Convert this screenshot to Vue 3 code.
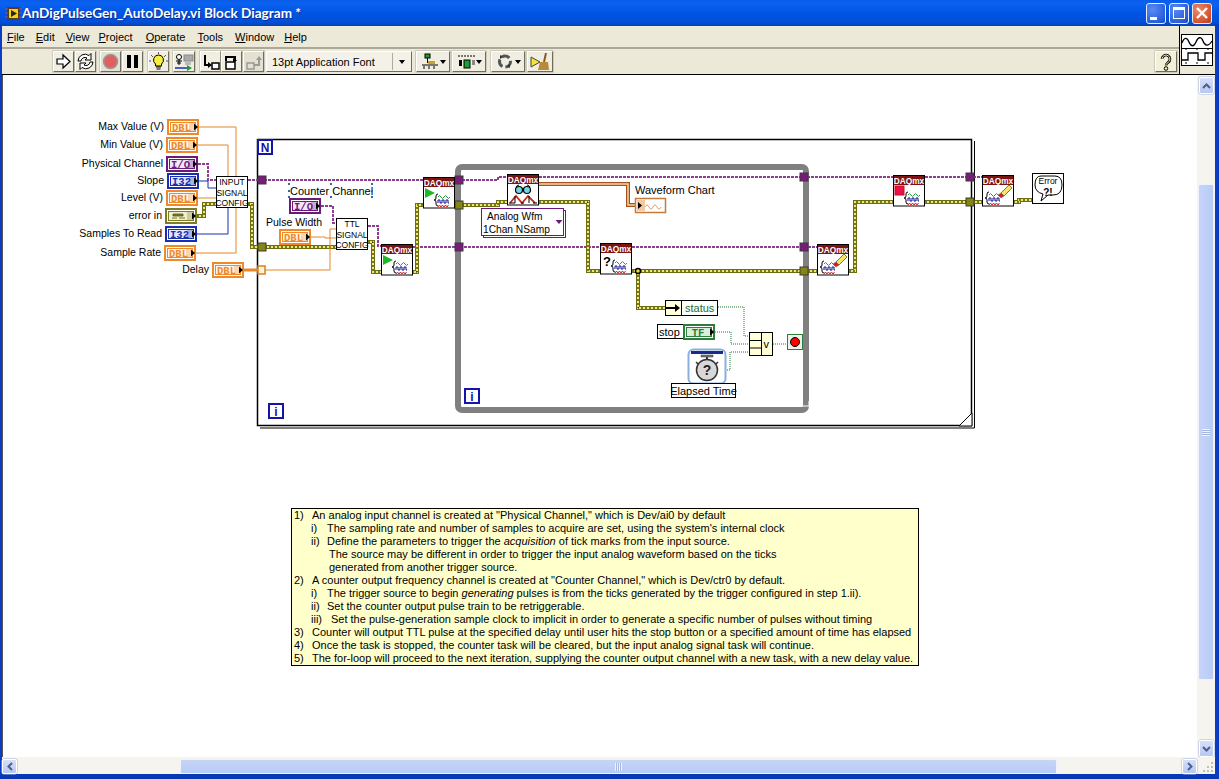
<template>
  <div class="window">
    <header class="titlebar">
      <svg class="title-icon" width="17" height="17" viewBox="0 0 17 17">
        <rect x="2" y="2" width="13" height="13" fill="#5a3a1a" />
        <rect x="4" y="4" width="9" height="9" fill="#f2d21e" />
        <path d="M6 5l6 3.5-6 3.5z" fill="#2a2a10" />
        <path d="M0 4h3M0 8h3M0 12h3M14 4h3M14 8h3M14 12h3" stroke="#c8452a" stroke-width="1.2" />
      </svg>
      <span class="title-text">AnDigPulseGen_AutoDelay.vi Block Diagram *</span>
      <div class="win-buttons">
        <div class="win-btn">
          <span class="min-mark"></span>
        </div>
        <div class="win-btn">
          <span class="max-mark"></span>
        </div>
        <div class="win-btn close">
          <svg width="14" height="14" viewBox="0 0 14 14">
            <path d="M2 2l10 10M12 2L2 12" stroke="#fff" stroke-width="2.4" />
          </svg>
        </div>
      </div>
    </header>

    <div class="bars">
      <div class="bars-left">
        <nav class="menubar">
          <span v-for="m in menus" :key="m" class="menu-item"><u>{{ m[0] }}</u>{{ m.slice(1) }}</span>
        </nav>
        <div class="toolbar">
          <button class="tool">
            <svg width="17" height="17" viewBox="0 0 17 17"><path d="M2 6h6V2l7 6.500-7 6.500v-4H2z" fill="#fff" stroke="#000" stroke-width="1.2" /></svg>
          </button>
          <button class="tool g1">
            <svg width="19" height="19" viewBox="0 0 19 19">
              <path d="M2 9a7 7 0 0 1 11-5.500L15 1.500V8H9l2-2a4 4 0 0 0-6 3z" fill="#fff" stroke="#000" />
              <path d="M17 10a7 7 0 0 1-11 5.500L4 17.500V11h6l-2 2a4 4 0 0 0 6-3z" fill="#fff" stroke="#000" />
            </svg>
          </button>
          <button class="tool pale g4">
            <svg width="17" height="17" viewBox="0 0 17 17"><circle cx="8.500" cy="8.500" r="7" fill="#e06060" stroke="#999" stroke-width="1.500" /></svg>
          </button>
          <button class="tool g1">
            <svg width="15" height="15" viewBox="0 0 15 15"><path d="M2 1h4v13H2zM9 1h4v13H9z" fill="#000" /></svg>
          </button>
          <button class="tool g5">
            <svg width="19" height="19" viewBox="0 0 19 19">
              <path d="M9.500 3a5 5 0 0 0-3 9v2h6v-2a5 5 0 0 0-3-9z" fill="#f7ee3a" stroke="#000" />
              <path d="M7 15h5M7.500 17h4" stroke="#000" />
              <path d="M9.500 0v2M2 3l2 2M17 3l-2 2M0 9h2M17 9h2" stroke="#555" />
            </svg>
          </button>
          <button class="tool g4 wide">
            <svg width="20" height="18" viewBox="0 0 20 18">
              <circle cx="5" cy="4" r="2.500" fill="#fff" stroke="#000" />
              <path d="M5 7v5M2 8h6M3 10h4" stroke="#000" />
              <rect x="10" y="2" width="9" height="6" fill="#aaa" stroke="#888" />
              <rect x="11" y="9" width="6" height="3" fill="#bbb" />
              <path d="M1 15h13" stroke="#1a2fb0" stroke-width="1.500" />
              <path d="M13 12l5 3-5 3z" fill="#18a030" />
            </svg>
          </button>
          <button class="tool g5">
            <svg width="18" height="18" viewBox="0 0 18 18"><path d="M3 2v10h5" fill="none" stroke="#000" stroke-width="2" /><path d="M6 9l4 3-4 3z" fill="#000" /><rect x="10" y="10" width="7" height="6" fill="#fff" stroke="#000" stroke-width="1.500" /></svg>
          </button>
          <button class="tool">
            <svg width="18" height="18" viewBox="0 0 18 18"><path d="M3 8V4h9v3" fill="none" stroke="#000" stroke-width="2" /><path d="M10 5l4 2.500-4 2.500z" fill="#000" /><rect x="3" y="9" width="9" height="7" fill="#fff" stroke="#000" stroke-width="1.500" /></svg>
          </button>
          <button class="tool pale g1">
            <svg width="18" height="18" viewBox="0 0 18 18"><rect x="2" y="10" width="7" height="6" fill="none" stroke="#999" stroke-width="1.500" /><path d="M9 12h5V6" fill="none" stroke="#999" stroke-width="2" /><path d="M11 7l3-4 3 4z" fill="#999" /></svg>
          </button>
          <button class="font-ring g2">
            <span class="font-name">13pt Application Font</span>
            <span class="font-drop"><i class="caret"></i></span>
          </button>
          <button class="tool ring g4">
            <svg width="20" height="17" viewBox="0 0 20 17"><rect x="4" y="1" width="5" height="4" fill="#18a030" stroke="#000" /><path d="M6.500 5v5M1 12h16" stroke="#000" /><rect x="7" y="8" width="7" height="3" fill="#c9a227" /><path d="M3 13v3M8 13v3M13 13v3" stroke="#000" /></svg>
            <i class="caret small"></i>
          </button>
          <button class="tool ring g2">
            <svg width="20" height="17" viewBox="0 0 20 17"><path d="M1 3h17" stroke="#000" stroke-dasharray="2 1" /><rect x="2" y="7" width="3" height="6" fill="#000" /><rect x="7" y="7" width="6" height="8" fill="#18a030" stroke="#000" /><rect x="15" y="7" width="3" height="5" fill="#888" /></svg>
            <i class="caret small"></i>
          </button>
          <button class="tool ring g5">
            <svg width="20" height="17" viewBox="0 0 20 17"><circle cx="9" cy="8.500" r="5.500" fill="none" stroke="#555" stroke-width="3" stroke-dasharray="8 3" /><path d="M4 2l3 2-3 2zM14 11l-3 2 3 2z" fill="#333" /></svg>
            <i class="caret small"></i>
          </button>
          <button class="tool broom g2">
            <svg width="20" height="18" viewBox="0 0 20 18"><path d="M1 4l9 5-9 5z" fill="#f2e33a" stroke="#444" /><path d="M16 0l-2 9" stroke="#8a5a20" stroke-width="2" /><path d="M10 9h8l1 8H8z" fill="#b98a3c" /></svg>
          </button>
          <div class="spacer"></div>
          <button class="tool help">
            <svg width="18" height="18" viewBox="0 0 18 18"><path d="M5 6a4 4 0 1 1 6 3.500c-1.500 1-2 1.500-2 3" fill="none" stroke="#000" stroke-width="2.600" /><path d="M5 6a4 4 0 1 1 6 3.500c-1.500 1-2 1.500-2 3" fill="none" stroke="#fbf3a0" stroke-width="1" /><circle cx="9" cy="15.500" r="1.800" fill="#fbf3a0" stroke="#000" /></svg>
          </button>
        </div>
      </div>
      <div class="vi-icon-pane">
        <svg class="vi-icon" width="32" height="32" viewBox="0 0 32 32">
          <rect x="0.500" y="0.500" width="31" height="31" fill="#fff" stroke="#000" />
          <path d="M1 9c2-6 5-6 7-1s5 5 7 0 5-6 7-1 5 6 9 0" fill="none" stroke="#000" stroke-width="1.300" />
          <path d="M5 14v2M16 14v2M27 14v2M5 28v2M16 28v2M27 28v2M1 14.500h30" stroke="#000" />
          <path d="M1 26h6v-7h10v7h7v-7h7" fill="none" stroke="#000" stroke-width="1.300" />
        </svg>
      </div>
    </div>

    <div class="main">
      <div class="canvas">
        <svg class="diagram" width="1194" height="683" viewBox="3 74 1194 683">
          <defs>
            <g id="wfm">
              <path d="M4 0q-2 0-2 2v2q0 2-2 2 2 0 2 2v2q0 2 2 2" fill="none" stroke="#000" />
              <path d="M4 3q1.500-3 3 0t3 0 3 0 3 0" fill="none" stroke="#2a9a3a" />
              <path d="M4 9V6h2v3h2V6h2v3h2V6h2v3h1" fill="none" stroke="#10109a" />
              <path d="M4 13l1.500-2 1.500 2 1.500-2 1.500 2 1.500-2 1.500 2 1.500-2" fill="none" stroke="#d02020" />
            </g>
          </defs>

          <!-- for loop -->
          <rect x="257.500" y="138.500" width="714" height="286" fill="none" stroke="#000" stroke-width="1.500" />
          <path d="M974.500 140v287H260" fill="none" stroke="#000" />
          <path d="M959 425l13-13v13z" fill="#fff" stroke="#000" />

          <!-- while loop -->
          <rect x="458" y="166" width="348" height="243" rx="4" fill="none" stroke="#808080" stroke-width="6" />
          <path d="M803 405h6v-5" fill="none" stroke="#fff" />

          <g v-for="(w, i) in wires" :key="i">
            <template v-if="w.kind === 'err'">
              <path :d="w.d" class="w err-a" />
              <path :d="w.d" class="w err-b" />
              <path :d="w.d" class="w err-c" />
            </template>
            <template v-else-if="w.kind === 'wave'">
              <path :d="w.d" class="w wave-a" />
              <path :d="w.d" class="w wave-b" />
            </template>
            <path v-else :d="w.d" class="w" :class="w.kind" />
          </g>
          <circle cx="638" cy="270" r="2.500" fill="#e8e050" stroke="#000" stroke-width="1.500" />

          <rect v-for="t in tunnels" :key="t.x + '-' + t.y" :x="t.x - 4" :y="t.y - 4" width="8" height="8" :fill="t.task ? '#7a1a7c' : '#85850f'" stroke="#3a3a3a" />
          <rect x="258" y="265" width="7" height="8" fill="#fff6d8" stroke="#d97f1f" stroke-width="1.500" />

          <!-- iteration and count boxes -->
          <g class="loop-box">
            <rect x="258" y="139" width="14" height="14" />
            <text x="265" y="150.500">N</text>
            <rect x="269" y="403" width="14" height="14" />
            <text x="276" y="414.500">i</text>
            <rect x="465" y="388" width="14" height="14" />
            <text x="472" y="399.500">i</text>
          </g>

          <!-- front panel terminals -->
          <g v-for="t in terminals" :key="t.label">
            <text class="label term" :x="t.x - 3" :y="t.y + 3" text-anchor="end">{{ t.label }}</text>
            <rect :x="t.x + 1" :y="t.y - 7" width="30" height="14" fill="#fff" :stroke="kinds[t.kind].c" stroke-width="2" />
            <rect :x="t.x + 3.500" :y="t.y - 4.500" width="25" height="9" :fill="kinds[t.kind].bg" :stroke="kinds[t.kind].c" />
            <rect :x="t.x + 22" :y="t.y - 4" width="6" height="8" :fill="kinds[t.kind].c" opacity="0.300" />
            <text v-if="t.kind !== 'err'" class="type" :x="t.x + 14.500" :y="t.y + 3.500" :fill="kinds[t.kind].c">{{ kinds[t.kind].txt }}</text>
            <path v-else :d="`M${t.x + 8} ${t.y - 2}h10v2h-10zM${t.x + 7} ${t.y + 2}h5M${t.x + 14} ${t.y + 2}h6`" fill="#7d7d28" stroke="#555510" stroke-width="0.800" />
            <path :d="`M${t.x + 27} ${t.y - 3.500}l4 3.500-4 3.500z`" fill="#000" />
          </g>

          <!-- free labels -->
          <text class="label term" x="266" y="225">Pulse Width</text>
          <text class="label" x="290" y="194">Counter Channel</text>
          <path d="M288 182h2v2h-2zM330 182h2v2h-2zM371 182h2v2h-2zM288 189h2v2h-2zM371 189h2v2h-2zM288 195h2v2h-2zM330 195h2v2h-2zM371 195h2v2h-2z" fill="#2a6ab0" />

          <!-- cluster sub vis -->
          <g v-for="b in subvis" :key="b.x">
            <rect :x="b.x + 0.500" :y="b.y + 0.500" width="31" height="31" fill="#fff" stroke="#000" />
            <text v-for="(l, n) in b.lines" :key="l" class="sub-text" :x="b.x + 16" :y="b.y + 9 + n * 10.500">{{ l }}</text>
          </g>

          <!-- daqmx blocks -->
          <g v-for="b in daq" :key="b.x + '-' + b.y" :transform="`translate(${b.x} ${b.y})`">
            <rect x="0.500" y="0.500" width="31" height="30.500" fill="#fff" stroke="#000" />
            <rect x="1" y="1" width="30" height="9" fill="#7c1414" />
            <text class="daq-text" x="16" y="8.500">DAQmx</text>
            <use v-if="b.kind !== 'read'" href="#wfm" :x="b.kind === 'clear' ? 3 : 11" y="17" />
            <path v-if="b.kind === 'start'" d="M2 11l10 5-10 5z" fill="#1fb82a" />
            <rect v-if="b.kind === 'stop'" x="2" y="11" width="9" height="9" fill="#ee1144" stroke="#c01030" />
            <text v-if="b.kind === 'done'" class="done-mark" x="7" y="23">?</text>
            <g v-if="b.kind === 'clear'">
              <path d="M19 18l8-8 3 3-8 8z" fill="#f4e66a" stroke="#8a7a20" />
              <path d="M19 18l3 3-3 2-3-3z" fill="#d21f1f" stroke="#666" stroke-width="0.500" />
            </g>
            <g v-if="b.kind === 'read'">
              <circle cx="12" cy="16" r="3.500" fill="#6fd6e6" stroke="#000" stroke-width="1.200" />
              <circle cx="20" cy="16" r="3.500" fill="#6fd6e6" stroke="#000" stroke-width="1.200" />
              <path d="M9 13q1-2 3-2M23 13q-1-2-3-2M15 15h2" fill="none" stroke="#000" />
              <path d="M3 29l6-7 6 7 6-7 7 7" fill="none" stroke="#cc2a1a" stroke-width="1.800" />
              <path d="M2 29h6M14 29h3M26 29h4M8 22v7M22 22v7" stroke="#000" />
            </g>
          </g>

          <!-- polymorphic selector -->
          <rect x="483.500" y="209.500" width="82" height="27" fill="#fff" stroke="#6a1b7a" />
          <rect x="481.500" y="207.500" width="82" height="27" fill="#fff" stroke="#6a1b7a" />
          <text class="label poly" x="487" y="219">Analog Wfm</text>
          <text class="label poly" x="483" y="232">1Chan NSamp</text>
          <path d="M555.500 219h7l-3.500 4z" fill="#6a1b7a" />

          <!-- chart -->
          <text class="label" x="635" y="193">Waveform Chart</text>
          <rect x="635.500" y="197.500" width="30" height="14" fill="#fff" stroke="#c67a3c" stroke-width="1.500" />
          <rect x="637" y="199" width="8" height="11" fill="#f4c9a0" />
          <path d="M638 201l4 3.500-4 3.500z" fill="#000" />
          <path d="M645 206q2-4 4 0t4 0 4 0 4 0" fill="none" stroke="#e0a070" />

          <!-- unbundle -->
          <rect x="665.500" y="299.500" width="52" height="15" fill="#fff" stroke="#000" />
          <rect x="666" y="300" width="15" height="14" fill="#ffffd8" />
          <path d="M681.500 300v14" stroke="#000" />
          <path d="M666 307h10" stroke="#000" stroke-width="2" />
          <path d="M675 303l5 4-5 4z" fill="#000" />
          <text class="label green" x="685" y="311">status</text>

          <!-- stop -->
          <rect x="657.500" y="323.500" width="26" height="14" fill="#fff" stroke="#000" />
          <text class="label" x="659" y="334.500">stop</text>
          <rect x="684" y="324" width="30" height="14" fill="#fff" stroke="#2d7d3c" stroke-width="2" />
          <rect x="686.500" y="326.500" width="25" height="9" fill="#d8f0d8" stroke="#2d7d3c" />
          <text class="type" x="698" y="334.500" fill="#2d7d3c">TF</text>
          <path d="M710 327l4 4-4 4z" fill="#000" />

          <!-- compound or -->
          <rect x="749.500" y="331.500" width="23" height="23" fill="#ffffd8" stroke="#000" />
          <path d="M761.500 332v22M750 339.500h11M750 347h11" stroke="#000" />
          <text class="label" x="763.500" y="347">v</text>

          <!-- loop condition -->
          <rect x="787.500" y="333.500" width="15" height="15" fill="#eaf4ea" stroke="#2d7d3c" />
          <circle cx="795" cy="341" r="4.500" fill="#ff0000" stroke="#000" />

          <!-- elapsed time -->
          <rect x="688.500" y="348.500" width="37" height="34" rx="5" fill="#fff" stroke="#8ab0e0" stroke-width="2" />
          <path d="M691 350h32v3h-32z" fill="#1a2a8a" />
          <path d="M701 354h12v2h-12z" fill="#777" stroke="#333" stroke-width="0.500" />
          <path d="M707 356v3" stroke="#333" stroke-width="2" />
          <path d="M696 361l2 2M718 361l-2 2" stroke="#333" stroke-width="1.500" />
          <circle cx="707" cy="369" r="10.500" fill="#d8d8d8" stroke="#333" stroke-width="1.500" />
          <text class="stopwatch" x="707" y="374">?</text>
          <rect x="671.500" y="382.500" width="64" height="14" fill="#fff" stroke="#000" />
          <text class="label" x="703.500" y="393.500" text-anchor="middle">Elapsed Time</text>

          <!-- error handler -->
          <rect x="1032.500" y="172.500" width="31" height="30" fill="#fff" stroke="#000" />
          <path d="M1041 175h14q7 0 7 9 0 10-9 10h-5l-7 6 2-7q-8-2-8-9 0-9 6-9z" fill="#fff" stroke="#000" />
          <text class="err-word" x="1048" y="182.500">Error</text>
          <text class="err-mark" x="1048" y="195">?!</text>
        </svg>

        <div class="note">
          <div v-for="(r, i) in notes" :key="i" class="note-row" :class="r.cls">
            <span class="note-mark">{{ r.mark }}</span>
            <span>{{ r.text }}<em v-if="r.em">{{ r.em }}</em>{{ r.tail }}</span>
          </div>
        </div>
      </div>
      <div class="vscroll">
        <div class="sb-btn">
          <svg width="9" height="6" viewBox="0 0 9 6"><path d="M1 5l3.500-3.500L8 5" fill="none" stroke="#4d6185" stroke-width="2" /></svg>
        </div>
        <div class="vtrack">
          <div class="vthumb"><span class="grip-v"></span></div>
        </div>
        <div class="sb-btn">
          <svg width="9" height="6" viewBox="0 0 9 6"><path d="M1 1l3.500 3.500L8 1" fill="none" stroke="#4d6185" stroke-width="2" /></svg>
        </div>
      </div>
    </div>

    <div class="hscroll">
      <div class="sb-btn narrow">
        <svg width="6" height="9" viewBox="0 0 6 9"><path d="M5 1L1.500 4.500 5 8" fill="none" stroke="#4d6185" stroke-width="2" /></svg>
      </div>
      <div class="htrack">
        <div class="hthumb"><span class="grip-h"></span></div>
      </div>
      <div class="sb-btn narrow">
        <svg width="6" height="9" viewBox="0 0 6 9"><path d="M1 1l3.500 3.500L1 8" fill="none" stroke="#4d6185" stroke-width="2" /></svg>
      </div>
      <div class="size-grip">
        <svg width="14" height="13" viewBox="0 0 14 13"><path d="M10 3h2v2h-2zM10 7h2v2h-2zM6 7h2v2H6zM10 11h2v2h-2zM6 11h2v2H6zM2 11h2v2H2z" fill="#c2bfb0" /></svg>
      </div>
    </div>
  </div>
</template>

<script setup>
const menus = ["File", "Edit", "View", "Project", "Operate", "Tools", "Window", "Help"];

const kinds = {
  dbl: { c: "#ee8a2c", bg: "#fff6e8", txt: "DBL" },
  i32: { c: "#1a2fb0", bg: "#e4e8ff", txt: "I32" },
  io: { c: "#6a1b7a", bg: "#f4e6f6", txt: "I/O" },
  err: { c: "#7d7d28", bg: "#f0f0cc", txt: "" },
};

const terminals = [
  { label: "Max Value (V)", kind: "dbl", x: 167, y: 126 },
  { label: "Min Value (V)", kind: "dbl", x: 166, y: 144 },
  { label: "Physical Channel", kind: "io", x: 166, y: 163 },
  { label: "Slope", kind: "i32", x: 167, y: 180 },
  { label: "Level (V)", kind: "dbl", x: 166, y: 197 },
  { label: "error in", kind: "err", x: 165, y: 215 },
  { label: "Samples To Read", kind: "i32", x: 165, y: 233 },
  { label: "Sample Rate", kind: "dbl", x: 164, y: 252 },
  { label: "Delay", kind: "dbl", x: 212, y: 269 },
  { label: "", kind: "dbl", x: 279, y: 236 },
  { label: " ", kind: "io", x: 289, y: 205 },
];

const wires = [
  { kind: "dbl", d: "M199 126H236V252H196" },
  { kind: "dbl", d: "M198 144H228V176" },
  { kind: "task", d: "M198 163H208V179H216" },
  { kind: "i32", d: "M199 180H208V187H216" },
  { kind: "dbl", d: "M198 197H216" },
  { kind: "err", d: "M197 215H204V203H216" },
  { kind: "i32", d: "M197 233H228V207" },
  { kind: "task", d: "M248 179H423" },
  { kind: "err", d: "M248 203H252V246H336" },
  { kind: "task", d: "M321 205H333V222H336" },
  { kind: "dbl", d: "M311 236H325V237H336" },
  { kind: "dbl", d: "M265 269H330V228H336" },
  { kind: "dblthick", d: "M244 269H258" },
  { kind: "task", d: "M368 225H378V245H381" },
  { kind: "err", d: "M368 241H373V271H381" },
  { kind: "task", d: "M412 246H600M632 246H817" },
  { kind: "err", d: "M412 271H417V204H423" },
  { kind: "task", d: "M454 179H498V176H507" },
  { kind: "err", d: "M454 204H498V201H507" },
  { kind: "err", d: "M539 201H588V270H600" },
  { kind: "task", d: "M539 176H893M925 176H982" },
  { kind: "wave", d: "M539 183H628V204H635" },
  { kind: "err", d: "M632 270H817" },
  { kind: "err", d: "M638 270V307H665" },
  { kind: "err", d: "M849 270H855V201H893" },
  { kind: "err", d: "M925 201H982" },
  { kind: "err", d: "M1013 201H1019V199H1032" },
  { kind: "bool", d: "M718 306H744V335H749" },
  { kind: "bool", d: "M715 331H731V343H749" },
  { kind: "bool", d: "M727 369H730V351H749" },
  { kind: "bool", d: "M773 343H787" },
];

const tunnels = [
  { x: 262, y: 179, task: true },
  { x: 262, y: 246 },
  { x: 459, y: 179, task: true },
  { x: 459, y: 204 },
  { x: 459, y: 246, task: true },
  { x: 804, y: 176, task: true },
  { x: 804, y: 246, task: true },
  { x: 804, y: 270 },
  { x: 970, y: 176, task: true },
  { x: 970, y: 201 },
];

const subvis = [
  { x: 216, y: 175, lines: ["INPUT", "SIGNAL", "CONFIG"] },
  { x: 336, y: 217, lines: ["TTL", "SIGNAL", "CONFIG"] },
];

const daq = [
  { x: 381, y: 243, kind: "start" },
  { x: 423, y: 176, kind: "start" },
  { x: 507, y: 173, kind: "read" },
  { x: 600, y: 242, kind: "done" },
  { x: 817, y: 243, kind: "clear" },
  { x: 893, y: 174, kind: "stop" },
  { x: 982, y: 174, kind: "clear" },
];

const notes = [
  { cls: "lv0", mark: "1)", text: 'An analog input channel is created at "Physical Channel," which is Dev/ai0 by default' },
  { cls: "lv1", mark: "i)", text: "The sampling rate and number of samples to acquire are set, using the system's internal clock" },
  { cls: "lv1", mark: "ii)", text: "Define the parameters to trigger the ", em: "acquisition", tail: " of tick marks from the input source." },
  { cls: "lv2", mark: "", text: "The source may be different in order to trigger the input analog waveform based on the ticks" },
  { cls: "lv2", mark: "", text: "generated from another trigger source." },
  { cls: "lv0", mark: "2)", text: 'A counter output frequency channel is created at "Counter Channel," which is Dev/ctr0 by default.' },
  { cls: "lv1", mark: "i)", text: "The trigger source to begin ", em: "generating", tail: " pulses is from the ticks generated by the trigger configured in step 1.ii)." },
  { cls: "lv1", mark: "ii)", text: "Set the counter output pulse train to be retriggerable." },
  { cls: "lv1 wide-mark", mark: "iii)", text: "Set the pulse-generation sample clock to implicit in order to generate a specific number of pulses without timing" },
  { cls: "lv0", mark: "3)", text: "Counter will output TTL pulse at the specified delay until user hits the stop button or a specified amount of time has elapsed" },
  { cls: "lv0", mark: "4)", text: "Once the task is stopped, the counter task will be cleared, but the input analog signal task will continue." },
  { cls: "lv0", mark: "5)", text: "The for-loop will proceed to the next iteration, supplying the counter output channel with a new task, with a new delay value." },
];
</script>

<style>
html,
body {
  margin: 0;
  overflow: hidden;
}
</style>

<style scoped>
.window {
  box-sizing: border-box;
  width: 1219px;
  height: 779px;
  display: flex;
  flex-direction: column;
  background: #ece9d8;
  border-left: 2px solid #0a3cc4;
  border-right: 4px solid #0a3cc4;
  border-bottom: 5px solid #0838b4;
  font-family: "Liberation Sans", Arial, sans-serif;
  color: #000;
}

.titlebar {
  height: 26px;
  margin: 0 -4px 0 -2px;
  display: flex;
  align-items: center;
  padding-left: 5px;
  background: linear-gradient(#0a5ce8 0, #0a62f0 12%, #0053e2 55%, #0050d8 85%, #0a3fb0 100%);
  color: #fff;
}

.title-icon {
  flex: none;
}

.title-text {
  font-family: Lato, "Open Sans", sans-serif;
  font-weight: 700;
  font-size: 13.6px;
  text-shadow: 1px 1px 0 #0a2a90;
}

.win-buttons {
  margin-left: auto;
  margin-right: 7px;
  display: flex;
  gap: 3px;
}

.win-btn {
  box-sizing: border-box;
  width: 20px;
  height: 21px;
  border: 1px solid #e6eefc;
  border-radius: 3px;
  background: radial-gradient(circle at 30% 30%, #5a8cf0, #2a5fe0 70%, #1a48c0);
  display: flex;
  align-items: center;
  justify-content: center;
}

.win-btn.close {
  background: radial-gradient(circle at 30% 30%, #e88a6a, #d8552f 65%, #b83a1a);
}

.min-mark {
  width: 7px;
  height: 3px;
  background: #fff;
  align-self: flex-end;
  margin: 0 6px 3px 0;
}

.max-mark {
  box-sizing: border-box;
  width: 12px;
  height: 12px;
  border: 1px solid #fff;
  border-top-width: 3px;
}

.bars {
  display: flex;
  height: 47px;
  border-bottom: 1px solid #000;
  margin-top: 1px;
}

.bars-left {
  flex: 1;
  min-width: 0;
}

.menubar {
  height: 20px;
  display: flex;
  align-items: center;
  padding-left: 5px;
  font-size: 11px;
  border-bottom: 2px solid #aca899;
}

.menu-item {
  margin-right: 11px;
}

.menu-item:nth-child(3) {
  margin-right: 9px;
}

.menu-item:nth-child(4) {
  margin-right: 13px;
}

.menu-item:nth-child(5),
.menu-item:nth-child(6) {
  margin-right: 12px;
}

.menu-item:nth-child(7) {
  margin-right: 10px;
}

.toolbar {
  height: 25px;
  display: flex;
  align-items: center;
  padding-left: 51px;
  padding-right: 2px;
}

button {
  font: inherit;
  padding: 0;
  margin: 0;
}

.tool {
  box-sizing: border-box;
  flex: none;
  width: 21px;
  height: 21px;
  display: flex;
  align-items: center;
  justify-content: center;
  background: #f0eee2;
  border: 1px solid;
  border-color: #fff #706c5c #706c5c #fff;
  box-shadow: 0 0 0 0.5px #b0ac9c;
}

.tool.pale {
  background: #e4e1d2;
}

.tool.wide {
  width: 22px;
}

.g1 {
  margin-left: 1px;
}

.g2 {
  margin-left: 2px;
}

.g4 {
  margin-left: 4px;
}

.g5 {
  margin-left: 5px;
}

.font-ring {
  box-sizing: border-box;
  flex: none;
  width: 146px;
  height: 21px;
  display: flex;
  align-items: center;
  background: #f4f2e8;
  border: 1px solid;
  border-color: #fff #706c5c #706c5c #fff;
  font-size: 11px;
}

.font-name {
  margin-left: 5px;
  flex: 1;
  text-align: left;
}

.font-drop {
  width: 18px;
  height: 17px;
  display: flex;
  align-items: center;
  justify-content: center;
  border-left: 1px solid #b0ac9c;
}

.caret {
  width: 0;
  height: 0;
  border-left: 3.5px solid transparent;
  border-right: 3.5px solid transparent;
  border-top: 4px solid #000;
}

.caret.small {
  margin-left: -1px;
}

.tool.ring {
  width: 34px;
}

.tool.broom {
  width: 26px;
}

.spacer {
  flex: 1;
}

.tool.help {
  width: 22px;
  background: #f2f0da;
}

.vi-icon-pane {
  width: 36px;
  border-left: 1px solid #000;
  margin-top: -1px;
  display: flex;
  justify-content: center;
  padding-top: 8px;
  box-sizing: border-box;
}

.vi-icon {
  margin-left: -2px;
}

.main {
  flex: 1;
  display: flex;
  min-height: 0;
}

.canvas {
  flex: 1;
  min-width: 0;
  position: relative;
  background: #fff;
  border-left: 1px solid #555;
  overflow: hidden;
}

.diagram {
  display: block;
}

.w {
  fill: none;
}

.dbl {
  stroke: #e8862a;
  stroke-width: 1;
}

.dblthick {
  stroke: #e8862a;
  stroke-width: 3;
}

.i32 {
  stroke: #1a2fb0;
  stroke-width: 1;
}

.task {
  stroke: #8b3f8e;
  stroke-width: 2;
  stroke-dasharray: 3 1;
}

.bool {
  stroke: #1c7a30;
  stroke-width: 1;
  stroke-dasharray: 1 1;
}

.err-a {
  stroke: #6d6d12;
  stroke-width: 4;
}

.err-b {
  stroke: #f0ec62;
  stroke-width: 2;
}

.err-c {
  stroke: #000;
  stroke-width: 1;
  stroke-dasharray: 2 2;
}

.wave-a {
  stroke: #a4521c;
  stroke-width: 4;
}

.wave-b {
  stroke: #f6d8a8;
  stroke-width: 1.5;
}

text {
  font-family: "Liberation Sans", Arial, sans-serif;
}

.label {
  font-size: 11px;
  fill: #000;
}

.label.term {
  font-size: 10.5px;
}

.label.poly {
  font-size: 10.2px;
}

.label.green {
  fill: #1c6a2c;
}

.type {
  font-family: "Liberation Mono", monospace;
  font-weight: 700;
  font-size: 10.5px;
  text-anchor: middle;
}

.loop-box rect {
  fill: #fff;
  stroke: #1414a8;
  stroke-width: 2;
}

.loop-box text {
  font-size: 12px;
  font-weight: 700;
  fill: #1414a8;
  text-anchor: middle;
}

.sub-text {
  font-size: 8.5px;
  text-anchor: middle;
  fill: #000;
}

.daq-text {
  font-size: 8.3px;
  font-weight: 700;
  fill: #fff;
  text-anchor: middle;
}

.done-mark {
  font-size: 13px;
  font-weight: 700;
  fill: #000;
  text-anchor: middle;
}

.stopwatch {
  font-size: 14px;
  font-weight: 700;
  fill: #222;
  text-anchor: middle;
}

.err-word {
  font-size: 8.5px;
  text-anchor: middle;
}

.err-mark {
  font-size: 10px;
  font-weight: 700;
  text-anchor: middle;
}

.note {
  position: absolute;
  left: 288px;
  top: 433px;
  box-sizing: border-box;
  width: 628px;
  height: 158px;
  padding: 0 0 0 2px;
  background: #ffffcc;
  border: 1px solid #000;
  font-size: 11px;
  line-height: 13px;
  white-space: nowrap;
}

.note-row {
  display: flex;
}

.note-mark {
  flex: none;
}

.lv0 .note-mark {
  width: 18px;
}

.lv1 {
  padding-left: 17px;
}

.lv1 .note-mark {
  width: 16px;
}

.wide-mark .note-mark {
  width: 20px;
}

.lv2 {
  padding-left: 35px;
}

.vscroll {
  width: 18px;
  display: flex;
  flex-direction: column;
  align-items: center;
  background: #f5f4ee;
  padding: 2px 0 0;
  box-sizing: border-box;
}

.sb-btn {
  box-sizing: border-box;
  flex: none;
  width: 15px;
  height: 17px;
  display: flex;
  align-items: center;
  justify-content: center;
  border: 1px solid #fff;
  border-radius: 2px;
  background: linear-gradient(#d6e0fb, #b8c8f4);
  box-shadow: 0 0 0 0.5px #a8b8dc;
}

.sb-btn.narrow {
  height: 15px;
}

.vtrack {
  flex: 1;
  width: 100%;
  padding: 90px 0 60px;
  box-sizing: border-box;
  display: flex;
  justify-content: center;
}

.vthumb {
  box-sizing: border-box;
  width: 16px;
  height: 496px;
  border: 1px solid #eef2fc;
  border-radius: 2px;
  background: linear-gradient(90deg, #c6d4f8, #b8caf6);
  display: flex;
  align-items: center;
  justify-content: center;
}

.grip-v {
  width: 8px;
  height: 7px;
  background: repeating-linear-gradient(#eef2fc 0 1px, #a8b8dc 1px 2px);
}

.hscroll {
  flex: none;
  height: 17px;
  display: flex;
  align-items: flex-start;
  background: #f5f4ee;
  padding-top: 2px;
  box-sizing: border-box;
}

.htrack {
  flex: 1;
  padding-left: 163px;
  height: 15px;
}

.hthumb {
  box-sizing: border-box;
  width: 877px;
  height: 15px;
  border: 1px solid #eef2fc;
  border-radius: 2px;
  background: linear-gradient(#c6d4f8, #b8caf6);
  display: flex;
  align-items: center;
  justify-content: center;
}

.grip-h {
  width: 7px;
  height: 8px;
  background: repeating-linear-gradient(90deg, #eef2fc 0 1px, #a8b8dc 1px 2px);
}

.size-grip {
  width: 18px;
  height: 15px;
  display: flex;
  justify-content: flex-end;
}
</style>
